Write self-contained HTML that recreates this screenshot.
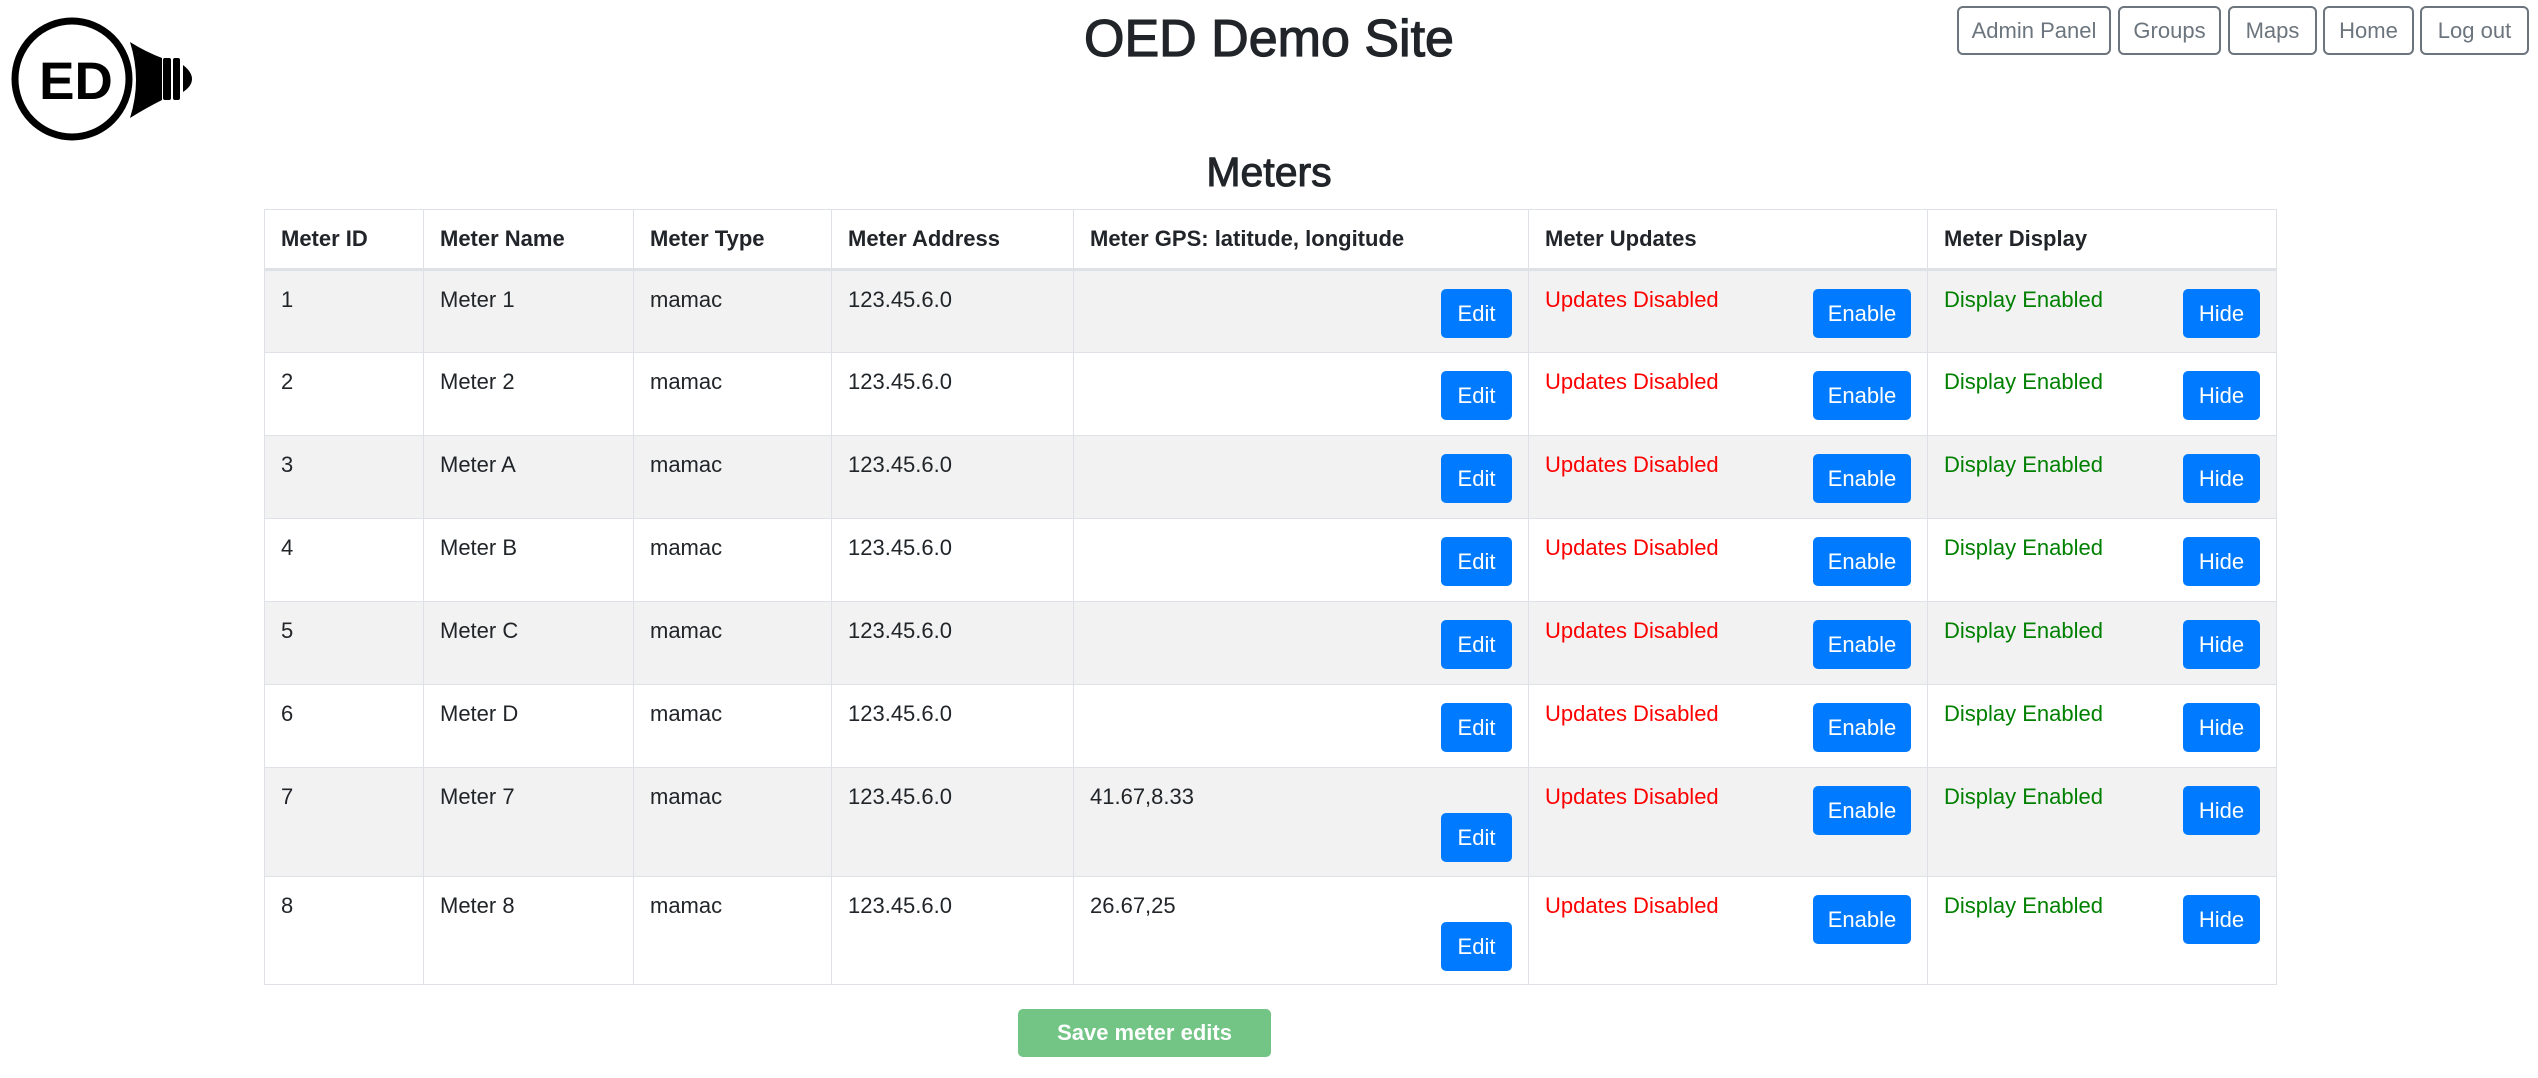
<!DOCTYPE html>
<html><head><meta charset="utf-8"><style>
*{box-sizing:border-box;margin:0;padding:0}
body{width:2538px;height:1078px;background:#fff;font-family:"Liberation Sans",sans-serif;color:#212529;position:relative;overflow:hidden}
.nav{position:absolute;top:6px;height:49px;border:2px solid #6c757d;border-radius:6px;color:#6c757d;font-size:22px;display:flex;align-items:center;justify-content:center}
h1{position:absolute;top:9px;left:0;width:2538px;text-align:center;font-size:52px;font-weight:normal;-webkit-text-stroke:1.2px #212529}
h2{position:absolute;top:149px;left:0;width:2538px;text-align:center;font-size:41px;font-weight:normal;-webkit-text-stroke:1px #212529}
table{position:absolute;left:264px;top:209px;width:2012px;border-collapse:collapse;table-layout:fixed;font-size:22px}
td,th{border:1.5px solid #dee2e6;vertical-align:top;padding:12px 16px 0;line-height:34px;text-align:left}
th{font-weight:bold;padding-top:12px;border-bottom:3px solid #dee2e6;height:60px}
tbody tr:nth-child(odd){background:#f2f2f2}
tr.r td{height:83px}
.b{float:right;margin-top:6px;height:49px;background:#007bff;color:#fff;border-radius:5px;font-size:22px;line-height:49px;text-align:center}
.red{color:#f00}.grn{color:#008000}
.save{position:absolute;left:1018px;top:1009px;width:253px;height:48px;background:#72c585;color:#fff;font-weight:bold;font-size:22px;border-radius:5px;display:flex;align-items:center;justify-content:center}
</style></head><body>
<svg style="position:absolute;left:0;top:0" width="200" height="160">
<ellipse cx="72" cy="79" rx="57" ry="58" fill="none" stroke="#000" stroke-width="7"/>
<text x="76" y="99" text-anchor="middle" font-family="Liberation Sans" font-weight="bold" font-size="53">ED</text>
<path d="M130 42 Q146 52 162 58 L162 100 Q146 108 130 118 Q142 80 130 42Z" fill="#000"/>
<rect x="163" y="58" width="8" height="42" rx="2"/>
<rect x="173" y="58" width="7" height="42" rx="2"/>
<path d="M183 65 Q192 72 192 79 Q192 86 183 92Z"/>
</svg>
<h1>OED Demo Site</h1>
<div class="nav" style="left:1957px;width:154px">Admin Panel</div>
<div class="nav" style="left:2118px;width:103px">Groups</div>
<div class="nav" style="left:2228px;width:89px">Maps</div>
<div class="nav" style="left:2323px;width:91px">Home</div>
<div class="nav" style="left:2420px;width:109px">Log out</div>
<h2>Meters</h2>
<table>
<colgroup><col style="width:159px"><col style="width:210px"><col style="width:198px"><col style="width:242px"><col style="width:455px"><col style="width:399px"><col style="width:349px"></colgroup>
<thead><tr><th>Meter ID</th><th>Meter Name</th><th>Meter Type</th><th>Meter Address</th><th>Meter GPS: latitude, longitude</th><th>Meter Updates</th><th>Meter Display</th></tr></thead>
<tbody>
<tr class="r"><td>1</td><td>Meter 1</td><td>mamac</td><td>123.45.6.0</td><td><span class="b" style="width:71px">Edit</span></td><td><span class="b" style="width:98px">Enable</span><span class="red">Updates Disabled</span></td><td><span class="b" style="width:77px">Hide</span><span class="grn">Display Enabled</span></td></tr>
<tr class="r"><td>2</td><td>Meter 2</td><td>mamac</td><td>123.45.6.0</td><td><span class="b" style="width:71px">Edit</span></td><td><span class="b" style="width:98px">Enable</span><span class="red">Updates Disabled</span></td><td><span class="b" style="width:77px">Hide</span><span class="grn">Display Enabled</span></td></tr>
<tr class="r"><td>3</td><td>Meter A</td><td>mamac</td><td>123.45.6.0</td><td><span class="b" style="width:71px">Edit</span></td><td><span class="b" style="width:98px">Enable</span><span class="red">Updates Disabled</span></td><td><span class="b" style="width:77px">Hide</span><span class="grn">Display Enabled</span></td></tr>
<tr class="r"><td>4</td><td>Meter B</td><td>mamac</td><td>123.45.6.0</td><td><span class="b" style="width:71px">Edit</span></td><td><span class="b" style="width:98px">Enable</span><span class="red">Updates Disabled</span></td><td><span class="b" style="width:77px">Hide</span><span class="grn">Display Enabled</span></td></tr>
<tr class="r"><td>5</td><td>Meter C</td><td>mamac</td><td>123.45.6.0</td><td><span class="b" style="width:71px">Edit</span></td><td><span class="b" style="width:98px">Enable</span><span class="red">Updates Disabled</span></td><td><span class="b" style="width:77px">Hide</span><span class="grn">Display Enabled</span></td></tr>
<tr class="r"><td>6</td><td>Meter D</td><td>mamac</td><td>123.45.6.0</td><td><span class="b" style="width:71px">Edit</span></td><td><span class="b" style="width:98px">Enable</span><span class="red">Updates Disabled</span></td><td><span class="b" style="width:77px">Hide</span><span class="grn">Display Enabled</span></td></tr>
<tr><td style="height:109px">7</td><td>Meter 7</td><td>mamac</td><td>123.45.6.0</td><td><div>41.67,8.33</div><span class="b" style="width:71px;margin-top:-1px">Edit</span></td><td><span class="b" style="width:98px">Enable</span><span class="red">Updates Disabled</span></td><td><span class="b" style="width:77px">Hide</span><span class="grn">Display Enabled</span></td></tr>
<tr><td style="height:108px">8</td><td>Meter 8</td><td>mamac</td><td>123.45.6.0</td><td><div>26.67,25</div><span class="b" style="width:71px;margin-top:-1px">Edit</span></td><td><span class="b" style="width:98px">Enable</span><span class="red">Updates Disabled</span></td><td><span class="b" style="width:77px">Hide</span><span class="grn">Display Enabled</span></td></tr>
</tbody></table>
<div class="save">Save meter edits</div>
</body></html>
